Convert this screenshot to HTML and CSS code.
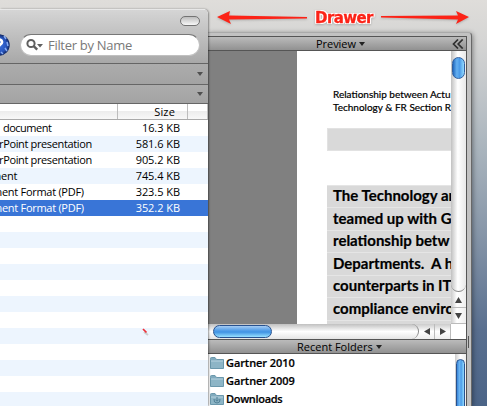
FILE: index.html
```html
<!DOCTYPE html>
<html lang="en">
<head>
<meta charset="utf-8">
<title>Drawer</title>
<link rel="stylesheet" href="styles.css">
</head>
<body>
<div class="desktop">
  <main class="window">
    <header class="titlebar">
      <span class="pill"></span>
      <div class="toolbar">
        <svg class="help" width="20" height="24" viewBox="0 0 20 24"><defs><radialGradient id="orb"><stop offset="0" stop-color="#3c72de"/><stop offset=".7" stop-color="#2855bd"/><stop offset="1" stop-color="#102660"/></radialGradient></defs><circle cx="-1" cy="12" r="10.7" fill="url(#orb)"/><path d="M4 3l2 3M5 15l2 3M1 19l2 2M7 9l1 4" fill="none" stroke="#87acf4" stroke-width="1.5"/><path d="M-4 8Q-1 5 1.500 7.500Q3 10 0 12Q-2 13-2 15M-2 17v2" fill="none" stroke="#fff" stroke-width="2.6"/></svg>
        <div class="search">
          <svg width="18" height="14" viewBox="0 0 18 14"><circle cx="5" cy="5.500" r="3.600" fill="none" stroke="#606060" stroke-width="2"/><path d="M7.700 8.200l3.500 3.500" stroke="#606060" stroke-width="2.400"/><path d="M11 6h6l-3 3.500z" fill="#606060"/></svg>
          <span>Filter by Name</span>
        </div>
      </div>
    </header>
    <div class="strip first"><i class="tri"></i></div>
    <div class="strip"><i class="tri"></i></div>
    <div class="columns"><span></span><span class="size">Size</span><span></span></div>
    <div class="files">
      <div class="row"><span class="kind k0">document</span><span class="kb">16.3 KB</span></div>
      <div class="row"><span class="kind k1">rPoint presentation</span><span class="kb">581.6 KB</span></div>
      <div class="row"><span class="kind k1">rPoint presentation</span><span class="kb">905.2 KB</span></div>
      <div class="row"><span class="kind k2">ment</span><span class="kb">745.4 KB</span></div>
      <div class="row"><span class="kind k3">ment Format (PDF)</span><span class="kb">323.5 KB</span></div>
      <div class="row selected"><span class="kind k3">ment Format (PDF)</span><span class="kb">352.2 KB</span></div>
    </div>
    <svg class="mark" width="8" height="8" viewBox="0 0 8 8"><path d="M2 4l4 3" stroke="#ccc" stroke-width="2"/><path d="M1 1l3.500 3.500" stroke="#ed3038" stroke-width="1.700"/></svg>
  </main>
  <section class="side">
    <div class="callout">
      <svg width="92" height="20" viewBox="0 0 92 20"><path d="M0 9L13 3L12 7.500L90 9V10.500L12 11.500L14 16z" fill="#fc2317"/></svg>
      <strong>Drawer</strong>
      <svg width="92" height="20" viewBox="0 0 92 20"><path d="M90 9L77 3L79 7.500L2 8V9.500L79 11.500L77 16z" fill="#fc2317"/></svg>
    </div>
    <div class="drawer">
      <div class="inner">
        <div class="bar preview"><span>Preview</span><i></i><svg class="chev" width="12" height="10" viewBox="0 0 12 10"><path d="M6 .5L1.500 5L6 9.500M10.700 .5L6.200 5L10.700 9.500" fill="none" stroke="#303030" stroke-width="1.700"/></svg></div>
        <div class="viewer">
          <div class="canvas"><div class="page">
            <p class="intro">Relationship between Actu<br>Technology &amp; FR Section R</p>
            <div class="block"></div>
            <div class="lines"><p>The Technology an</p><p>teamed up with G</p><p>relationship betw</p><p>Departments.&nbsp; A h</p><p>counterparts in IT</p><p>compliance enviro</p></div>
          </div></div>
          <div class="vscroll"><div class="vtrack"><div class="vthumb"></div></div><div class="arrow"><svg width="7" height="6"><path d="M3.500 0L7 6H0z"/></svg></div><div class="arrow"><svg width="7" height="6"><path d="M0 0H7L3.500 6z"/></svg></div></div>
        </div>
        <div class="hscroll"><div class="htrack"><div class="hthumb"></div></div><div class="harrow"><svg width="6" height="7"><path d="M6 0V7L0 3.500z"/></svg></div><div class="harrow"><svg width="6" height="7"><path d="M0 0V7L6 3.500z"/></svg></div><div class="corner"></div></div>
        <div class="bar recent"><span>Recent Folders</span><i></i></div>
        <div class="folders">
          <div class="list">
            <div class="folder"><svg width="14" height="13" viewBox="0 0 14 13"><path d="M.5 2.500V1.500Q.5 .5 1.500 .5H5L6.500 2.500H13.500V11.500H.5z" fill="#80aabd" stroke="#6b98ac"/><path d="M1 4H13V11H1z" fill="#8db5c6"/><path d="M1 4H13" stroke="#b8d3df"/></svg><span>Gartner 2010</span></div>
            <div class="folder"><svg width="14" height="13" viewBox="0 0 14 13"><path d="M.5 2.500V1.500Q.5 .5 1.500 .5H5L6.500 2.500H13.500V11.500H.5z" fill="#80aabd" stroke="#6b98ac"/><path d="M1 4H13V11H1z" fill="#8db5c6"/><path d="M1 4H13" stroke="#b8d3df"/></svg><span>Gartner 2009</span></div>
            <div class="folder"><svg width="14" height="13" viewBox="0 0 14 13"><path d="M.5 2.500V1.500Q.5 .5 1.500 .5H5L6.500 2.500H13.500V11.500H.5z" fill="#80aabd" stroke="#6b98ac"/><path d="M1 4H13V11H1z" fill="#8db5c6"/><path d="M1 4H13" stroke="#b8d3df"/><path d="M7 4V8M5.300 6.500L7 8.300L8.700 6.500M4 6Q3.500 10 7 10Q10.500 10 10 6" fill="none" stroke="#507f96"/></svg><span class="down">Downloads</span></div>
          </div>
          <div class="lscroll"><div></div></div>
        </div>
      </div>
      <span class="grip"></span>
    </div>
  </section>
</div>
</body>
</html>
```
FILE: styles.css
```css
* { box-sizing: border-box; }
body { margin: 0; font: 11px "Open Sans", "Noto Sans", sans-serif; color: #000; }
p { margin: 0; }
svg { display: block; flex: none; }
.desktop {
  width: 487px; height: 406px; overflow: hidden; display: flex;
  background: linear-gradient(180deg, #dfddda 0, #d5d5d4 40px, #c8cbcd 75px, #a9b4bd 150px, #8897a9 230px, #596f8f 330px, #4b6487 406px);
}
.window {
  width: 208px; height: 397px; margin-top: 9px; flex: none; position: relative; z-index: 1;
  background: #fff; border-top-right-radius: 5px; overflow: hidden; box-shadow: 1px 0 2px #0006;
}
.titlebar { height: 55px; background: linear-gradient(#d5d5d5, #c4c4c4 20px, #a8a8a8); border-top: 1px solid #e8e8e8; border-bottom: 1px solid #656565; padding-top: 6px; }
.pill { display: block; width: 20px; height: 10px; margin-left: 180px; border: 1px solid #737373; border-radius: 5px; background: linear-gradient(#bdbdbd, #f8f8f8); }
.toolbar { display: flex; align-items: center; height: 24px; margin-top: 7px; }
.search { width: 180px; height: 22px; border-radius: 11px; background: #fff; border: 1px solid #c0c0c0; border-top-color: #777; display: flex; align-items: center; padding-left: 5px; }
.search svg { margin-right: 4px; }
.search span { font-size: 13px; line-height: 20px; color: #797979; letter-spacing: -.3px; white-space: nowrap; }
.strip { height: 19px; background: linear-gradient(#acacac, #a3a3a3); border-bottom: 1px solid #666; display: flex; justify-content: flex-end; align-items: center; padding-right: 5px; }
.first { height: 21px; }
.tri { border: solid transparent; border-width: 4px 3.5px 0; border-top-color: #505050; }
.columns { height: 16px; display: grid; grid-template-columns: 118px 70px 20px; border-bottom: 1px solid #aaa; background: linear-gradient(#fff 0 45%, #ededed 50%, #f8f8f8); }
.columns span { border-right: 1px solid #bdbdbd; line-height: 15px; text-align: right; padding-right: 12px; }
.columns .size { letter-spacing: .15px; }
.files { height: 287px; background: repeating-linear-gradient(#fff 0 16px, #edf5fe 16px 32px); }
.row { height: 16px; display: flex; line-height: 16px; white-space: nowrap; padding-right: 28px; justify-content: space-between; }
.selected { background: #3975d7; color: #fff; }
.kb { letter-spacing: -.05px; }
.k0 { margin-left: 3px; letter-spacing: -.5px; }
.k1 { margin-left: -1px; letter-spacing: -.36px; }
.k2 { margin-left: -9px; letter-spacing: -.2px; }
.k3 { margin-left: -8px; letter-spacing: -.28px; }
.mark { position: absolute; left: 142px; top: 319px; }
.side { width: 264px; flex: none; }
.callout { height: 32px; display: flex; padding: 8px 0 0 9px; filter: drop-shadow(0 1px 1px #8888); }
.callout strong { width: 70px; text-align: center; font: bold 15px/21px "DejaVu Sans", sans-serif; letter-spacing: -.6px; color: #fc2317; -webkit-text-stroke: .3px #fc2317; text-shadow: 1px 0 #fff, -1px 0 #fff, 0 1px #fff, 0 -1px #fff, 1px 1px #fff, -1px -1px #fff, 1px -1px #fff, -1px 1px #fff; }
.drawer { height: 374px; background: #c2c2c2; border-top: 1px solid #aaa; border-right: 1px solid #686868; border-top-right-radius: 4px; padding: 3px 5px 0 0; position: relative; box-shadow: 1px 1px 5px #0006; }
.inner { height: 370px; border-top: 1px solid #555; border-right: 1px solid #555; width: 259px; display: flex; flex-direction: column; }
.bar { height: 14px; flex: none; display: flex; align-items: center; background: linear-gradient(#bbb, #919191); border-bottom: 1px solid #555; line-height: 13px; }
.bar i { border: solid transparent; border-width: 4px 3px 0; border-top-color: #222; margin-left: 3px; }
.preview { padding-left: 108px; }
.preview span { letter-spacing: -.05px; }
.chev { margin-left: auto; margin-right: 2px; }
.viewer { display: flex; height: 273px; }
.canvas { width: 243px; padding-left: 88px; background: #808080; overflow: hidden; border-left: 1px solid #777; }
.page { background: #fff; height: 273px; width: 160px; padding-top: 37px; font-family: Lato, sans-serif; white-space: nowrap; }
.intro { margin-left: 36px; font-size: 10px; line-height: 13px; height: 40px; -webkit-text-stroke: .2px #000; }
.block { height: 23px; background: #d9d9d9; margin-left: 30px; border: 1px solid #e2e2e2; }
.lines { margin: 34px 0 0 30px; padding-left: 6px; height: 140px; background: repeating-linear-gradient(#e5e5e5 0 1px, #d9d9d9 1px 22.5px); font-weight: bold; font-size: 15px; line-height: 21.5px; }
.lines p { height: 22.5px; -webkit-text-stroke: .2px #000; }
.vscroll { width: 15px; background: linear-gradient(90deg, #ccc, #fff 40%, #eee); }
.vtrack { height: 241px; padding: 6px 1px 0; border-bottom: 1px solid #888; border-radius: 0 0 8px 8px; background: linear-gradient(90deg, #c0c0c0, #fff 45%, #e8e8e8); }
.vthumb { width: 13px; height: 22px; border: 1px solid #315f9e; border-radius: 7px; background: linear-gradient(90deg, #2168bd, #65b0f1 35%, #4a9ae8 60%, #93daff); }
.arrow { height: 16px; display: flex; align-items: center; justify-content: center; border-bottom: 1px solid #bbb; fill: #444; }
.hscroll { height: 15px; display: flex; background: linear-gradient(#ccc, #fff 50%, #eee); flex: none; }
.htrack { width: 211px; padding: 1px 0 0 5px; border-right: 1px solid #888; border-radius: 0 8px 8px 0; background: linear-gradient(#c0c0c0, #fff 50%, #e5e5e5); }
.hthumb { width: 59px; height: 13px; border: 1px solid #28528f; border-radius: 7px; background: linear-gradient(#a5ccf4, #559fe8 40%, #4093e3 55%, #98e0ff); }
.harrow { width: 16px; display: flex; align-items: center; justify-content: center; border-right: 1px solid #bbb; fill: #444; }
.corner { flex: 1; background: #fff; }
.recent { height: 15px; border-top: 1px solid #555; padding-left: 89px; }
.folders { display: flex; height: 53px; background: #fff; }
.list { width: 247px; flex: none; }
.folder { height: 18px; display: flex; align-items: center; padding-left: 2px; font-weight: 600; line-height: 18px; letter-spacing: -.08px; -webkit-text-stroke: .2px #000; }
.folder svg { -webkit-text-stroke: 0; }
.folder span { margin-left: 2px; }
.folder .down { letter-spacing: -.3px; }
.lscroll { flex: 1; padding: 5px 0 0 1px; background: linear-gradient(90deg, #ccc, #fff 50%, #eee); }
.lscroll div { width: 9px; height: 60px; border: 1px solid #28528f; border-radius: 5px; background: linear-gradient(90deg, #3985d8, #6cb5f2 35%, #4c9ee9 60%, #93daff); }
.grip { position: absolute; left: 260px; top: 303px; width: 1px; height: 12px; background: #555; }
```
